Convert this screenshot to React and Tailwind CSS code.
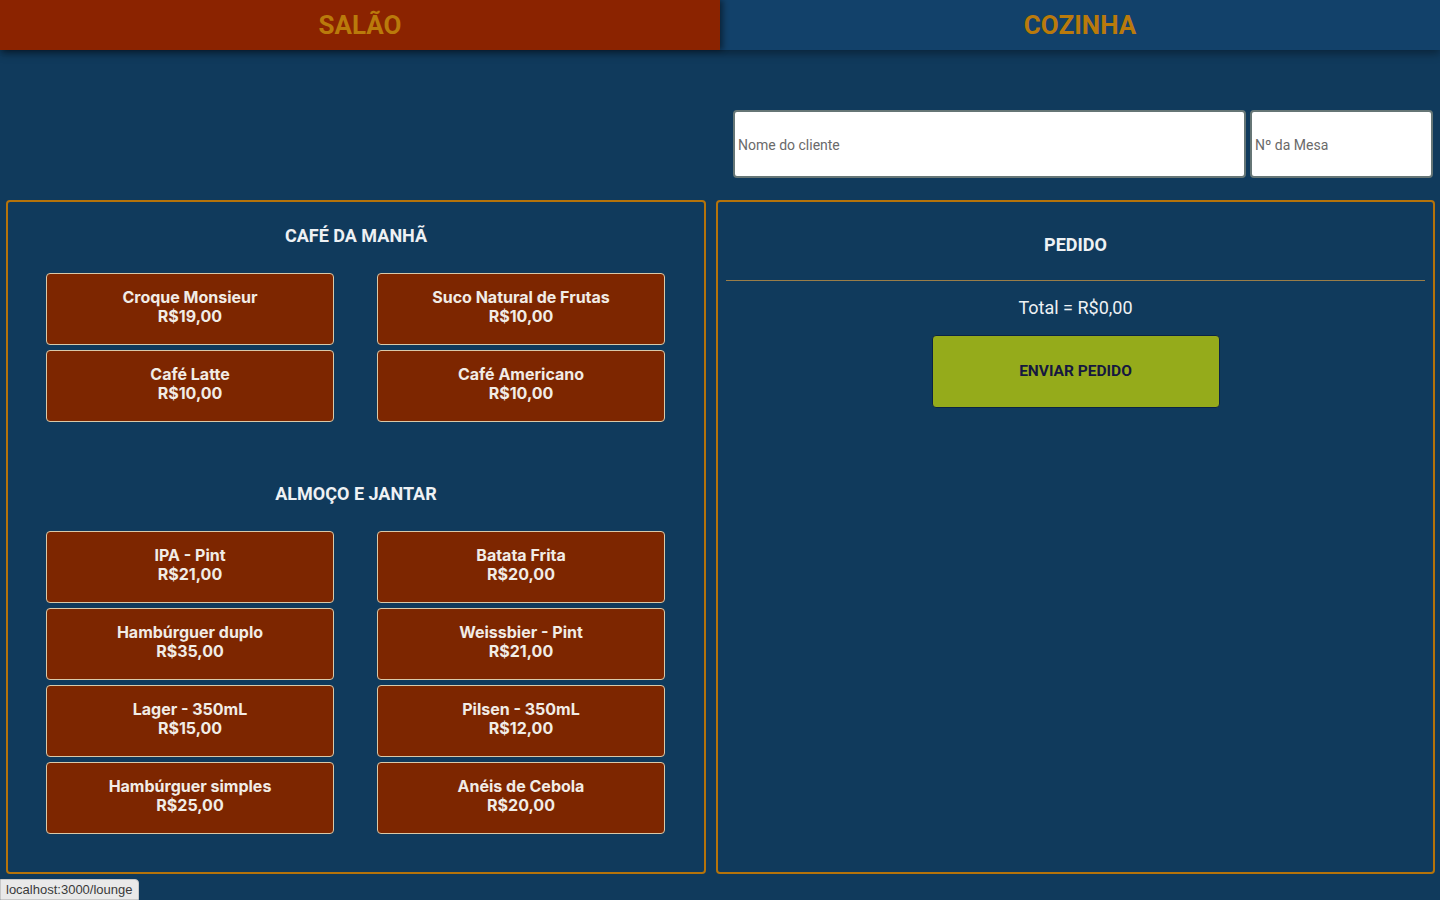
const breakfast = [
  { name: 'Croque Monsieur', price: 'R$19,00' },
  { name: 'Suco Natural de Frutas', price: 'R$10,00' },
  { name: 'Café Latte', price: 'R$10,00' },
  { name: 'Café Americano', price: 'R$10,00' },
]

const lunch = [
  { name: 'IPA - Pint', price: 'R$21,00' },
  { name: 'Batata Frita', price: 'R$20,00' },
  { name: 'Hambúrguer duplo', price: 'R$35,00' },
  { name: 'Weissbier - Pint', price: 'R$21,00' },
  { name: 'Lager - 350mL', price: 'R$15,00' },
  { name: 'Pilsen - 350mL', price: 'R$12,00' },
  { name: 'Hambúrguer simples', price: 'R$25,00' },
  { name: 'Anéis de Cebola', price: 'R$20,00' },
]

const MenuItem = ({ item }) => (
  <button className="h-[72px] w-[288px] rounded-[4px] border border-[#d9c9a9] bg-[#7d2600] pb-[4px] text-[16px] font-bold leading-[19px] text-[#f1ece6] font-['Inter',sans-serif]">
    {item.name}
    <br />
    {item.price}
  </button>
)

const MenuSection = ({ title, items, className }) => (
  <div className={className}>
    <h2 className="text-center text-[18px] font-bold leading-[27px] text-[#eef1f4]">{title}</h2>
    <div className="mt-[24px] grid grid-cols-[288px_288px] gap-x-[43px] gap-y-[5px] pl-[38px]">
      {items.map((item) => (
        <MenuItem key={item.name} item={item} />
      ))}
    </div>
  </div>
)

const App = () => {
  return (
    <div className="relative min-h-screen bg-[#103a5c] font-['Roboto',sans-serif]">
      <header className="relative z-10 grid h-[50px] grid-cols-2 shadow-[0_4px_8px_rgba(0,0,0,0.35)]">
        <div className="relative z-10 flex items-center justify-center bg-[#8b2300] shadow-[3px_0_6px_rgba(0,0,0,0.45)]">
          <span className="text-[26px] font-bold text-[#ba7a0b]">SALÃO</span>
        </div>
        <div className="flex items-center justify-center bg-[#12416a]">
          <span className="text-[26px] font-bold text-[#ba7a0b]">COZINHA</span>
        </div>
      </header>

      <div className="flex justify-end gap-[4px] pr-[7px] pt-[60px]">
        <input
          placeholder="Nome do cliente"
          className="h-[68px] w-[513px] rounded-[4px] border-2 border-[#667676] bg-white pl-[3px] pt-[2px] text-[14px] text-[#333] placeholder:text-[#6a6a6a] outline-none"
        />
        <input
          placeholder="Nº da Mesa"
          className="h-[68px] w-[183px] rounded-[4px] border-2 border-[#667676] bg-white pl-[3px] pt-[2px] text-[14px] text-[#333] placeholder:text-[#6a6a6a] outline-none"
        />
      </div>

      <main className="mt-[22px] grid h-[674px] grid-cols-[700px_719px] gap-[10px] pl-[6px]">
        <section className="rounded-[4px] border-2 border-[#b5730a] pt-[20px]">
          <MenuSection title="CAFÉ DA MANHÃ" items={breakfast} />
          <MenuSection title="ALMOÇO E JANTAR" items={lunch} className="mt-[58px]" />
        </section>

        <section className="flex flex-col items-center rounded-[4px] border-2 border-[#b5730a] px-[8px]">
          <h2 className="mt-[29px] text-center text-[18px] font-bold leading-[27px] text-[#eef1f4]">PEDIDO</h2>
          <hr className="mt-[22px] w-full border-0 border-t border-[#9a7d48]" />
          <p className="mt-[13px] text-[18px] leading-[27px] text-[#eef1f4]">Total = R$0,00</p>
          <button className="mt-[14px] h-[73px] w-[288px] shrink-0 rounded-[4px] border border-[#0b2444] bg-[#95ab1b] text-[15.5px] font-bold text-[#16183f]">
            ENVIAR PEDIDO
          </button>
        </section>
      </main>

      <div className="fixed bottom-0 left-0 z-20 rounded-tr-[4px] border border-[#c8c8c8] bg-[#e9e9e9] px-[5px] py-[2px] text-[13px] leading-[15px] text-[#3a3a3a] font-['Liberation_Sans',sans-serif]">
        localhost:3000/lounge
      </div>
    </div>
  )
}

export default App
